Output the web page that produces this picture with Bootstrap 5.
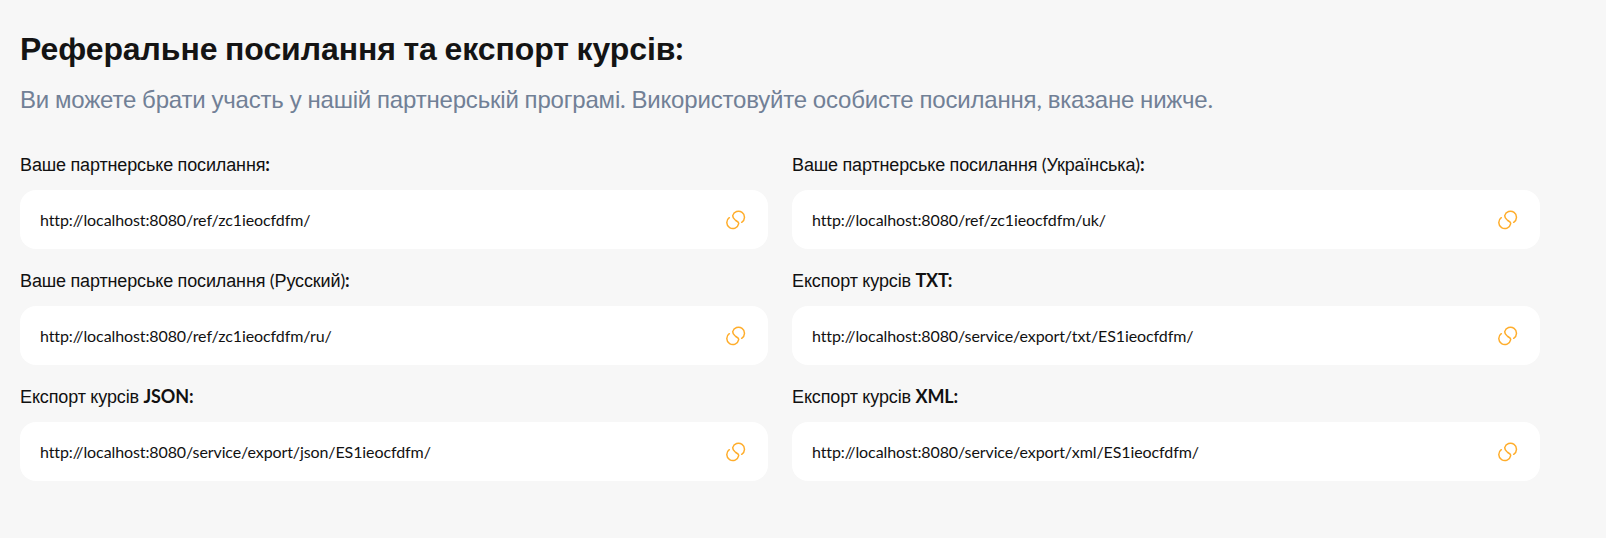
<!DOCTYPE html>
<html lang="uk"><head><meta charset="utf-8"><title>Реферальне посилання</title>
<link href="https://cdn.jsdelivr.net/npm/bootstrap@5.3.0/dist/css/bootstrap.min.css" rel="stylesheet">
<style>
body{background:#f7f7f7;font-family:"Lato","Liberation Sans",sans-serif;color:#111;overflow:hidden}
.cy{font-family:"Liberation Sans",sans-serif}
.page-wrap{padding:26px 66px 0 20px}
.main-title{font-size:32px;font-weight:700;line-height:44px;height:44px;margin:0 0 13px;color:#141414;letter-spacing:-.08px}
.sub-title{font-size:24px;line-height:32px;height:32px;color:#718096;margin:0 0 37px;letter-spacing:-.19px}
.link-grid{display:grid;grid-template-columns:1fr 1fr;column-gap:24px}
.link-label{font-size:18px;line-height:24px;height:24px;margin:0 0 14px;color:#111;letter-spacing:-.13px}
.link-box{height:59px;border-radius:16px;background:#fff;padding:0 22px 0 20px;margin-bottom:19px;font-size:16px;letter-spacing:-.1px}
.link-icon{width:20px;height:20px;flex:none}
</style></head><body>
<svg width="0" height="0" class="d-none"><symbol id="lnk" viewBox="0 0 20 20"><path d="M15.7 12.3A6 6 0 1 0 6.7 5.6C6.8 8.5 8.6 9.3 9.7 10.4S12.9 11.5 12.7 13.7A6 6 0 1 1 3.3 7.7" fill="none" stroke="#ffad2b" stroke-width="1.5" stroke-linecap="round"/></symbol></svg>
<div class="page-wrap">
<h1 class="main-title"><span class="cy">Реферальне</span> <span class="cy">посилання</span> <span class="cy">та</span> <span class="cy">експорт</span> <span class="cy">курсів</span>:</h1>
<p class="sub-title"><span class="cy">Ви</span> <span class="cy">можете</span> <span class="cy">брати</span> <span class="cy">участь</span> <span class="cy">у</span> <span class="cy">нашій</span> <span class="cy">партнерській</span> <span class="cy">програмі</span>. <span class="cy">Використовуйте</span> <span class="cy">особисте</span> <span class="cy">посилання</span>, <span class="cy">вказане</span> <span class="cy">нижче</span>.</p>
<div class="link-grid">
<div><div class="link-label"><span class="cy">Ваше</span> <span class="cy">партнерське</span> <span class="cy">посилання</span><b>:</b></div><div class="link-box d-flex align-items-center justify-content-between"><span>http://localhost:8080/ref/zc1ieocfdfm/</span><svg class="link-icon"><use href="#lnk"/></svg></div></div>
<div><div class="link-label"><span class="cy">Ваше</span> <span class="cy">партнерське</span> <span class="cy">посилання</span> (<span class="cy">Українська</span>)<b>:</b></div><div class="link-box d-flex align-items-center justify-content-between"><span>http://localhost:8080/ref/zc1ieocfdfm/uk/</span><svg class="link-icon"><use href="#lnk"/></svg></div></div>
<div><div class="link-label"><span class="cy">Ваше</span> <span class="cy">партнерське</span> <span class="cy">посилання</span> (<span class="cy">Русский</span>)<b>:</b></div><div class="link-box d-flex align-items-center justify-content-between"><span>http://localhost:8080/ref/zc1ieocfdfm/ru/</span><svg class="link-icon"><use href="#lnk"/></svg></div></div>
<div><div class="link-label"><span class="cy">Експорт</span> <span class="cy">курсів</span> <b>TXT:</b></div><div class="link-box d-flex align-items-center justify-content-between"><span>http://localhost:8080/service/export/txt/ES1ieocfdfm/</span><svg class="link-icon"><use href="#lnk"/></svg></div></div>
<div><div class="link-label"><span class="cy">Експорт</span> <span class="cy">курсів</span> <b>JSON:</b></div><div class="link-box d-flex align-items-center justify-content-between"><span>http://localhost:8080/service/export/json/ES1ieocfdfm/</span><svg class="link-icon"><use href="#lnk"/></svg></div></div>
<div><div class="link-label"><span class="cy">Експорт</span> <span class="cy">курсів</span> <b>XML:</b></div><div class="link-box d-flex align-items-center justify-content-between"><span>http://localhost:8080/service/export/xml/ES1ieocfdfm/</span><svg class="link-icon"><use href="#lnk"/></svg></div></div>
</div></div>
<script src="https://cdn.jsdelivr.net/npm/bootstrap@5.3.0/dist/js/bootstrap.bundle.min.js"></script>
</body></html>
